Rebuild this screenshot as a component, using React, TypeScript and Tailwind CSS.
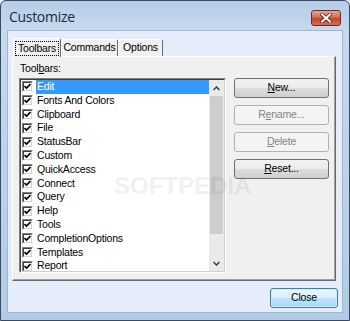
import React from "react";

const items = [
  "Edit",
  "Fonts And Colors",
  "Clipboard",
  "File",
  "StatusBar",
  "Custom",
  "QuickAccess",
  "Connect",
  "Query",
  "Help",
  "Tools",
  "CompletionOptions",
  "Templates",
  "Report",
];

const font = { fontFamily: '"Liberation Sans", Arial, sans-serif' };

function Check() {
  return (
    <div className="w-[11px] h-[11px] shrink-0 border-t border-l border-t-[#808080] border-l-[#808080] border-b border-r border-b-white border-r-white">
      <div className="w-full h-full bg-white border-t border-l border-t-[#404040] border-l-[#404040] border-b border-r border-b-[#d4d0c8] border-r-[#d4d0c8] flex items-center justify-center">
        <svg width="7" height="7" viewBox="0 0 7 7">
          <path d="M0.5 3 L2.5 5 L6.5 1" stroke="#000" strokeWidth="1.7" fill="none" />
        </svg>
      </div>
    </div>
  );
}

function Btn({ children, disabled }: { children: React.ReactNode; disabled?: boolean }) {
  return (
    <div
      className={
        "h-[20px] w-[95px] rounded-[3px] border flex items-center justify-center text-[10.5px] tracking-[-0.2px] " +
        (disabled
          ? "border-[#adb2b5] bg-[#f4f4f4] text-[#838383]"
          : "border-[#707070] bg-[linear-gradient(#f2f2f2_0%,#ebebeb_50%,#dddddd_50%,#cfcfcf_100%)] text-black")
      }
    >
      <span>{children}</span>
    </div>
  );
}

export default function App() {
  return (
    <div className="w-[350px] h-[321px] overflow-hidden bg-[#f0f0f0]" style={font}>
      <div className="w-[350px] h-[321px] border border-[#3b4a5e] rounded-t-[6px] bg-[linear-gradient(#b7cde7,#c6d9ef_30px,#b3cbe6_100%)] flex flex-col relative">
        {/* title bar */}
        <div className="h-[29px] flex items-start justify-between shrink-0">
          <span
            className="text-[14px] tracking-[-0.3px] text-[#1e2a3a] pl-[8px] pt-[7px] leading-[18px]"
            style={{ fontFamily: '"Open Sans", "Noto Sans", sans-serif' }}
          >
            Customize
          </span>
          <div className="mt-[9px] mr-[8px] w-[30px] h-[16px] rounded-[3px] border border-[#6b2a22] bg-[linear-gradient(#e8a493,#d5634a_50%,#c0432b_50%,#d46d55)] flex items-center justify-center">
            <svg width="12" height="10" viewBox="0 0 12 10">
              <path d="M2 1.5 L10 8.5 M10 1.5 L2 8.5" stroke="#5a2018" strokeWidth="3.6" strokeLinecap="square" />
              <path d="M2 1.5 L10 8.5 M10 1.5 L2 8.5" stroke="#fff" strokeWidth="2" strokeLinecap="square" />
            </svg>
          </div>
        </div>
        {/* client */}
        <div className="mx-[6px] h-[283px] border border-[#9fb6d1] bg-[#e4edf9] flex flex-col relative">
          <div className="pl-[5px] pt-[7px] flex items-end">
            <div className="h-[19px] w-[48px] bg-[#f0f0f0] border-t border-l border-t-white border-l-white border-r border-r-[#696969] rounded-t-[2px] flex items-center justify-center relative z-10 -mb-[1px]">
              <span className="text-[10.5px] tracking-[-0.2px] px-[2px] leading-[13px] border border-dotted border-black">Toolbars</span>
            </div>
            <div className="h-[17px] w-[57px] bg-[#f0f0f0] border-t border-l border-t-white border-l-white border-r border-r-[#696969] rounded-t-[2px] flex items-center justify-center text-[10.5px] tracking-[-0.2px]">
              Commands
            </div>
            <div className="h-[17px] w-[45px] bg-[#f0f0f0] border-t border-l border-t-white border-l-white border-r border-r-[#696969] rounded-t-[2px] flex items-center justify-center text-[10.5px] tracking-[-0.2px]">
              Options
            </div>
          </div>
          {/* panel */}
          <div className="ml-[4px] w-[324px] h-[225px] bg-[#f0f0f0] border-t border-l border-t-white border-l-white border-r border-b border-r-[#696969] border-b-[#696969] shadow-[inset_-1px_-1px_0_#a0a0a0] flex">
            <div className="pl-[6px] pt-[5px] flex flex-col">
              <div className="text-[10.5px] tracking-[-0.2px] leading-[13px] h-[16px] pl-[1px]">
                Tool<span className="underline">b</span>ars:
              </div>
              <div className="w-[207px] h-[195px] border-t border-l border-t-[#808080] border-l-[#808080] border-b border-r border-b-white border-r-white">
                <div className="w-full h-full border-t border-l border-t-[#404040] border-l-[#404040] border-b border-r border-b-[#d4d0c8] border-r-[#d4d0c8] bg-white flex overflow-hidden">
                  <div className="flex-1 flex flex-col">
                    {items.map((it, i) => (
                      <div key={it} className="h-[13.8px] shrink-0 flex items-center pl-[1px]">
                        <Check />
                        <div
                          className={
                            "ml-[3px] flex-1 h-[13.8px] flex items-center text-[10.5px] tracking-[-0.2px] pl-[1px] " +
                            (i === 0 ? "bg-[#3399ff] text-white" : "text-black")
                          }
                        >
                          {it}
                        </div>
                      </div>
                    ))}
                  </div>
                  <div className="w-[15px] bg-[#eaeaea] flex flex-col">
                    <div className="h-[16px] flex items-center justify-center">
                      <svg width="7" height="5" viewBox="0 0 7 5">
                        <path d="M0.5 4 L3.5 1 L6.5 4" stroke="#404040" strokeWidth="1.5" fill="none" />
                      </svg>
                    </div>
                    <div className="h-[138px] bg-[#cdcdcd] mx-[1px]" />
                    <div className="flex-1" />
                    <div className="h-[16px] flex items-center justify-center">
                      <svg width="7" height="5" viewBox="0 0 7 5">
                        <path d="M0.5 1 L3.5 4 L6.5 1" stroke="#404040" strokeWidth="1.5" fill="none" />
                      </svg>
                    </div>
                  </div>
                </div>
              </div>
            </div>
            <div className="ml-[8px] pt-[21px] flex flex-col gap-[7px]">
              <Btn>
                <span className="underline">N</span>ew...
              </Btn>
              <Btn disabled>
                R<span className="underline">e</span>name...
              </Btn>
              <Btn disabled>
                <span className="underline">D</span>elete
              </Btn>
              <Btn>
                <span className="underline">R</span>eset...
              </Btn>
            </div>
          </div>
          <div className="flex justify-end pr-[4px] pt-[7px]">
            <div className="w-[68px] h-[20px] rounded-[3px] border border-[#3c7fb1] bg-[linear-gradient(#eaf6fd_0%,#d9f0fc_50%,#bee6fd_50%,#a7d9f5_100%)] shadow-[inset_0_0_0_1px_#c9ecfe] flex items-center justify-center text-[10.5px] tracking-[-0.2px]">
              Close
            </div>
          </div>
          <div className="absolute left-[106px] top-[143px] text-[24px] leading-[24px] font-bold text-[#000000] opacity-[0.05] pointer-events-none">
            SOFTPEDIA
          </div>
        </div>
      </div>
    </div>
  );
}
